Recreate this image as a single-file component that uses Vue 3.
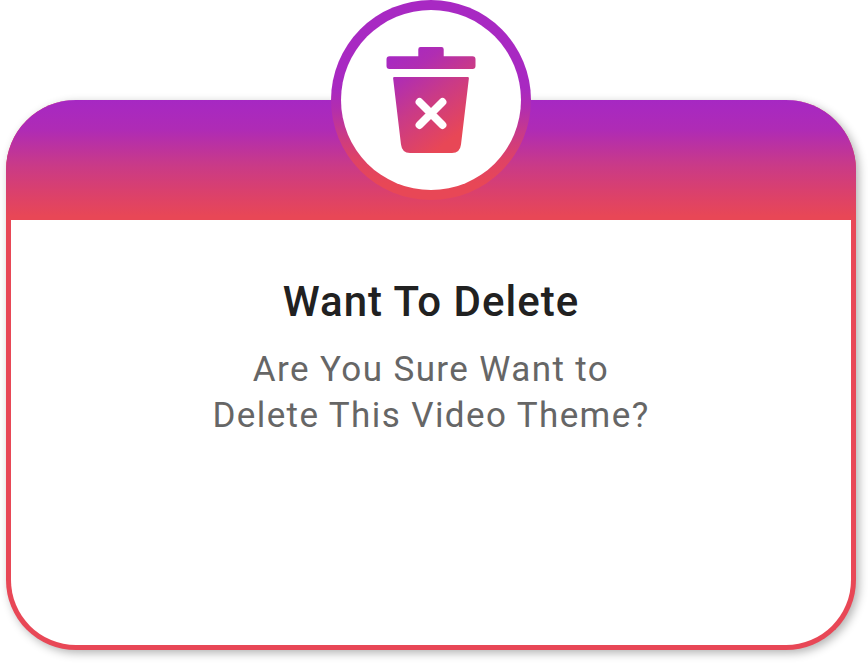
<script setup>
const title = 'Want To Delete'
const lines = ['Are You Sure Want to', 'Delete This Video Theme?']
</script>

<template>
  <main class="stage">
    <section class="dialog" role="dialog" :aria-label="title">
      <header class="band">
        <div class="badge">
          <div class="disc">
            <svg class="trash" viewBox="0 0 90 106" aria-hidden="true">
              <defs>
                <linearGradient id="lid" gradientUnits="userSpaceOnUse" x1="10" y1="8" x2="75" y2="96">
                  <stop offset="0" stop-color="#a829c1" />
                  <stop offset="0.2" stop-color="#b02db2" />
                  <stop offset="0.5" stop-color="#c93a88" />
                  <stop offset="0.92" stop-color="#e84756" />
                </linearGradient>
              </defs>
              <path
                fill="url(#lid)"
                d="M34.500 0H55.500Q57.700 0 57.700 2.200V9.200H86.500Q89.500 9.200 89.500 12.200V19Q89.500 22 86.500 22H3.500Q0.500 22 0.500 19V12.200Q0.500 9.200 3.500 9.200H32.300V2.200Q32.300 0 34.500 0Z"
              />
              <path
                fill="url(#lid)"
                d="M8.300 30H81.700Q83 30 82.900 31.300L75 97.500Q74 106 66 106H24Q16 106 15 97.500L7.100 31.300Q7 30 8.300 30Z"
              />
              <path
                d="M33.500 55L56.500 78M56.500 55L33.500 78"
                fill="none"
                stroke="#fff"
                stroke-width="7.800"
                stroke-linecap="round"
              />
            </svg>
          </div>
        </div>
      </header>
      <div class="content">
        <h1 class="title">{{ title }}</h1>
        <p class="message">
          <span v-for="line in lines" :key="line" class="line">{{ line }}</span>
        </p>
      </div>
    </section>
  </main>
</template>

<style>
body {
  margin: 0;
  background: #fff;
  overflow: hidden;
}
</style>

<style scoped>
.stage {
  box-sizing: border-box;
  width: 868px;
  height: 663px;
  padding: 100px 12px 13px 6px;
  font-family: Roboto, sans-serif;
}
.dialog {
  box-sizing: border-box;
  display: flex;
  flex-direction: column;
  height: 550px;
  border: 5px solid #e84756;
  border-top: 0;
  border-radius: 70px;
  background: #fff;
  box-shadow: 3px 3px 10px rgba(0, 0, 0, 0.3);
}
.band {
  display: flex;
  justify-content: center;
  height: 120px;
  margin: 0 -5px;
  border-radius: 70px 70px 0 0;
  background: linear-gradient(#a628c3 0%, #af2bb5 25%, #c93a88 54%, #dc416a 79%, #e84756 97%);
}
.badge {
  box-sizing: border-box;
  width: 200px;
  height: 200px;
  margin-top: -100px;
  padding: 10px;
  border-radius: 50%;
  background: linear-gradient(#a829c3 0%, #a829c1 44%, #b22daf 54%, #c93a88 67%, #df4265 80%, #e84756 92%);
}
.disc {
  box-sizing: border-box;
  height: 180px;
  padding: 37px 45px;
  border-radius: 50%;
  background: #fff;
}
.trash {
  display: block;
  width: 90px;
  height: 106px;
}
.content {
  padding-top: 57px;
  text-align: center;
}
.title {
  margin: 0;
  color: #212121;
  font-size: 42px;
  font-weight: 500;
  line-height: 50px;
  letter-spacing: 1px;
}
.message {
  margin: 20px 0 0;
  color: #666;
  font-size: 35px;
  line-height: 45.500px;
  letter-spacing: 1.400px;
}
.line {
  display: block;
}
</style>
